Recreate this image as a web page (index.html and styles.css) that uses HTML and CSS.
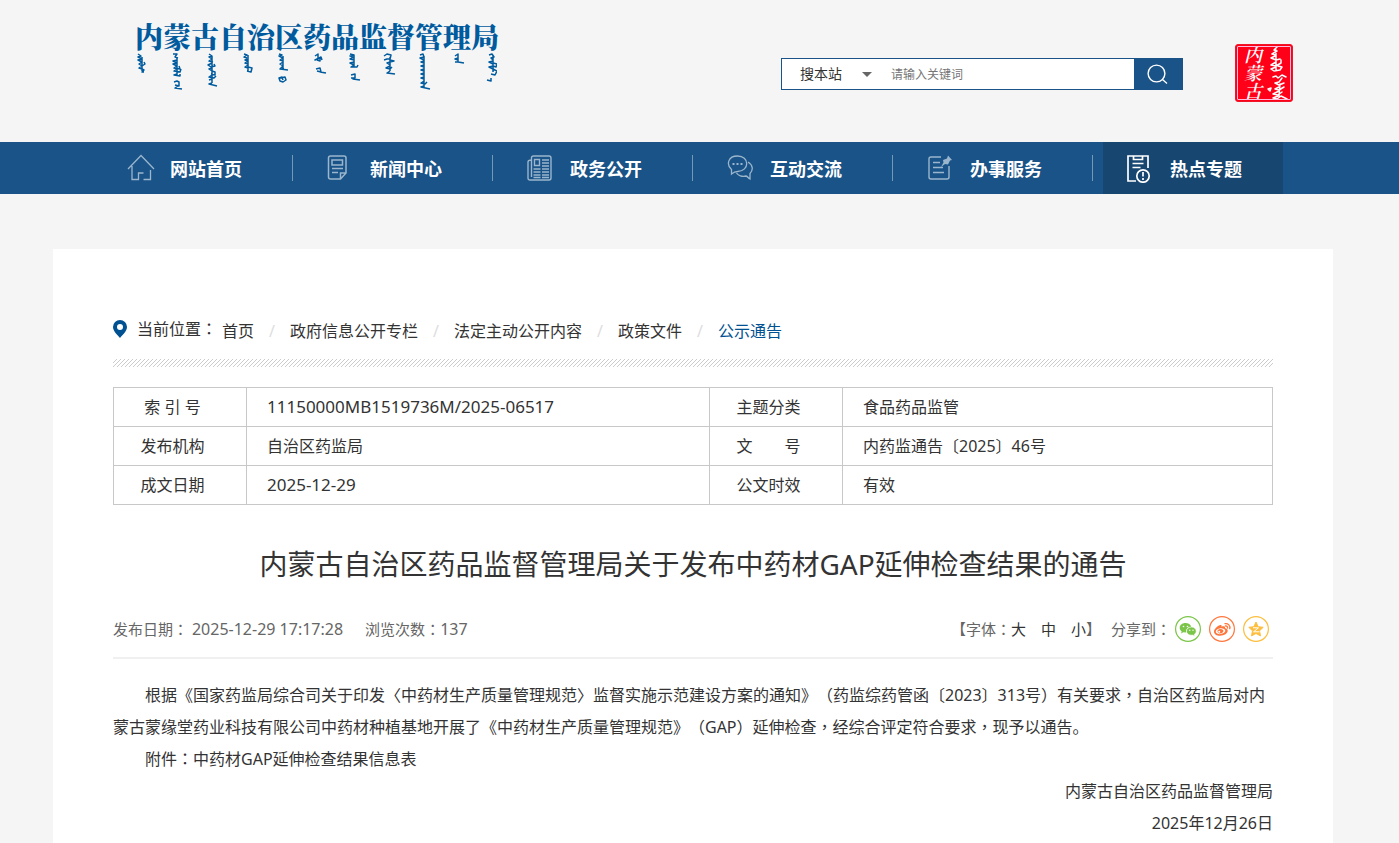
FILE: index.html
```html
<!DOCTYPE html>
<html lang="zh-CN">
<head>
<meta charset="utf-8">
<meta name="viewport" content="width=device-width, initial-scale=1">
<title>内蒙古自治区药品监督管理局</title>
<link rel="stylesheet" href="styles.css">
</head>
<body>
<header class="header">
  <div class="wrap header-inner">
    <a class="logo" href="#">
      <span class="logo-name">内蒙古自治区药品监督管理局</span>
      <svg class="logo-script" viewBox="0 0 362 40" width="362" height="40" aria-hidden="true">
        <g fill="none" stroke="#005b9e" stroke-width="1.500" stroke-linejoin="round">
          <path d="M3 2l3 2-3 1 4 2-4 1 4 2M7 5v14M7 10l-3 2 3 2 3-2-1-2M7 14l-3 2 3 1 2 1-2 2 2 0"/>
          <path d="M38 2h4l-2 3 3 1M42 5v18M42 8l-4 1 4 2-4 1 4 2-3 2 6 1-1-3M42 17l-3 2 6 1 1-3M42 22l-3 1 6 1v-2M39 30l3-1 2 1v4l-4-1M43 34l-3 2 7 1"/>
          <path d="M74 2l3 2-3 1 3 2-3 2 4 1M77 4v27M77 11l-4 2 3 2 4-1-1-2M77 16l-3 1 3 2 3 1v3l-4-1M77 23l-3 2 5 1 2-2M77 27l-3 1M77 31l-3 1 8 2"/>
          <path d="M109 2l3 1-3 2 3 1M113 3v17M113 7l-3 1 3 1-3 2 3 1M113 13l-3 2 3 1M113 15l4 1-1 4-4-1"/>
          <path d="M144 2l3 1-3 1 4 2-3 2 3 1M148 4v13M148 10l-3 2 3 2-3 3 8 1M145 26l5-1 1 3-3 2-3-1-1-3 3-1 1 3"/>
          <path d="M180 4l3-2v5l-3 1 6-3 1 3M185 6v3l-3-1M181 17l4-1 1 4-4-1M185 20l6 1"/>
          <path d="M215 2l4 1-4 1 4 1-4 2 4 1M219 3v12M219 10l-4 1 4 2-3 2 6 0 1-2M216 23l4-1v4h-4M219 26l-1 1 7 1"/>
          <path d="M249 4l3-2 4 1-1 4h-3l-3 1M255 5v14M255 8l4 1-4 1-3 1 3 2M255 14l-4 2 4 1 2-2M255 19l-3 2 8 1"/>
          <path d="M285 3l3-1 1 3-4 1 4 2M289 4v31M289 9l-3 1 3 1M289 13l-3 1 3 1M289 17l-3 1 3 1M289 21l-3 1 3 1M289 25l-3 1 3 1M289 29l-3 2 4 1 2-2M289 34l-3 1 9 2"/>
          <path d="M320 4l3-2v4l-3 1 3 1M323 4v6h-3M323 10l6 1"/>
          <path d="M354 3l3-1 2 3-3 1 2 2M358 4v16M358 9l-4 1 4 2M358 11l4 1-1 3-3-1-4 1 4 2 4 2-2 4-4-1M352 28l4 1v-3"/>
        </g>
      </svg>
    </a>
    <form class="search" role="search">
      <span class="scope">
        <select aria-label="搜索范围"><option>搜本站</option></select>
      </span>
      <input type="text" placeholder="请输入关键词" aria-label="请输入关键词">
      <button type="button" aria-label="搜索">
        <svg viewBox="0 0 22 22" width="22" height="22" fill="none" stroke="#fff" stroke-width="1.4"><circle cx="9.500" cy="10.500" r="8.400"/><path d="M15.500 16.500l4.500 4"/></svg>
      </button>
    </form>
    <div class="seal">
      <span class="seal-name">内蒙古</span>
      <svg viewBox="0 0 24 56" width="24" height="56" aria-hidden="true" fill="none" stroke="#fff" stroke-width="1.500" stroke-linejoin="round" stroke-linecap="round">
        <path d="M11 2l-3 3 3 1-5 3 4 1M10 5v20M9 11l-4 2 5 2M10 15l4-1M10 17l-5 3 5 1 5-3v-3M10 22l-5 2 3 2 6-1 2-3-4-1"/>
        <path d="M7 32l3-1 2 2 4-3 4 2M16 33l-3 4-4 1 4 2 5-2M14 39l-1 12M13 42l-4 2 4 1 5-3M13 46l-6 3 5 1 4-3M12 51l-5 2 4 1 4-3 6 3M2 44l3-1-1 3z"/>
      </svg>
    </div>
  </div>
</header>

<nav class="nav">
  <ul class="wrap nav-list">
    <li><a href="#">
      <svg viewBox="0 0 28 28" fill="none" stroke="currentColor" stroke-width="1.300"><path d="M1 15L14 1.500 27 15M5 12v13.500h6.500V19H16.500M16.500 25.500h7V23.500M23.500 16v9.500"/></svg>
      <span>网站首页</span></a></li>
    <li><a href="#">
      <svg viewBox="0 0 28 28" fill="none" stroke="currentColor" stroke-width="1.500"><path d="M13 25H3.500Q1.500 25 1.500 23V4Q1.500 2 3.500 2H17q2 0 2 2V19l-5.500 6H12M13.500 25v-6H19"/><path d="M5 6h10.500v5H5zM5 14.500h11M5 18.500h6"/></svg>
      <span>新闻中心</span></a></li>
    <li><a href="#">
      <svg viewBox="0 0 28 28" fill="none" stroke="currentColor" stroke-width="1.400"><path d="M4.500 23V4q0-2 2-2H22q2 0 2 2v20q0 2-2 2H3q-2 0-2-2V8q0-2 3.500-2"/><path d="M7.500 5.500h5v6h-5zM15 6h7M15 9h7M15 12h7M6.500 15h7M15 15h7M6.500 18h7M15 18h7M6.500 21h7M15 21h7M6.500 23.500h7M15 23.500h7"/></svg>
      <span>政务公开</span></a></li>
    <li><a href="#">
      <svg viewBox="0 0 28 28" fill="none" stroke="currentColor" stroke-width="1.300"><path d="M4.500 20v-4.500C-1 10.500 1 2 10.500 2c12 0 12.500 15 0 15.500-1 0-3 0-6 2.500zM21 8c5 3 5.500 8 2 11.500V25c-2-1-2-2.500-4-3-4 1-8-.5-9.500-3"/><path d="M5.500 10h2M9.500 10h2M13.500 10h2" stroke-width="2"/></svg>
      <span>互动交流</span></a></li>
    <li><a href="#">
      <svg viewBox="0 0 28 28" fill="none" stroke="currentColor" stroke-width="1.400"><path d="M14 3H4Q2 3 2 5v18q0 2 2 2h16q2 0 2-2V12"/><path d="M6 8.500h7M6 13.500h10M6 18.500h11"/><path d="M21 1.500l4 4.500-2 .5-2 4-3-.5-4 3 2.500-4.500-.5-2.500 4-1.500z" fill="currentColor" stroke="none"/></svg>
      <span>办事服务</span></a></li>
    <li class="active"><a href="#">
      <svg viewBox="0 0 28 30" fill="none" stroke="currentColor" stroke-width="1.700"><path d="M9 28H1V3h20v12M6.500 3v3.500h9V3M5.500 10.500h11M5.500 14.500h8"/><circle cx="16" cy="23" r="6.200"/><path d="M16 19v4.500M16 25v2"/></svg>
      <span>热点专题</span></a></li>
  </ul>
</nav>

<main class="main">
  <article class="wrap paper">
    <div class="location">
      <svg class="pin" viewBox="0 0 14 18" width="14" height="18" aria-hidden="true"><path fill="#005192" fill-rule="evenodd" d="M7 0a7 7 0 0 1 7 7c0 4-4.500 8-7 11C4.500 15 0 11 0 7a7 7 0 0 1 7-7zm0 4a3 3 0 1 0 0 6 3 3 0 0 0 0-6z"/></svg>
      <span class="location-label">当前位置<i lang="zh-TW">：</i></span>
      <ol class="crumbs">
        <li><a href="#">首页</a></li>
        <li><a href="#">政府信息公开专栏</a></li>
        <li><a href="#">法定主动公开内容</a></li>
        <li><a href="#">政策文件</a></li>
        <li><a class="current" href="#">公示通告</a></li>
      </ol>
    </div>
    <div class="stripes"></div>
    <table class="info">
      <colgroup><col class="c-label"><col class="c-wide"><col class="c-label"><col></colgroup>
      <tbody>
        <tr><th scope="row">索 引 号</th><td class="num">11150000MB1519736M/2025-06517</td><th scope="row">主题分类</th><td>食品药品监管</td></tr>
        <tr><th scope="row">发布机构</th><td>自治区药监局</td><th scope="row">文&emsp;&emsp;号</th><td>内药监通告〔2025〕46号</td></tr>
        <tr><th scope="row">成文日期</th><td class="num">2025-12-29</td><th scope="row">公文时效</th><td>有效</td></tr>
      </tbody>
    </table>
    <h1>内蒙古自治区药品监督管理局关于发布中药材GAP延伸检查结果的通告</h1>
    <div class="meta">
      <p class="meta-left"><span>发布日期<i lang="zh-TW">：</i> <time>2025-12-29 17:17:28</time></span><span>浏览次数<i lang="zh-TW">：</i><b>137</b></span></p>
      <div class="meta-right">
        <div class="sizes">【字体<i lang="zh-TW">：</i><button type="button">大</button><button type="button">中</button><button type="button">小</button>】</div>
        <span class="share-label">分享到<i lang="zh-TW">：</i></span>
        <div class="share">
          <a href="#" aria-label="微信"><svg viewBox="0 0 26 26" width="26" height="26"><circle cx="13" cy="13" r="12.400" fill="#fff" stroke="#7bc549" stroke-width="1.200"/><path fill="#7bc549" d="M10.500 7c-3.500 0-5.800 2.200-5.800 4.700 0 1.600.8 2.800 2 3.700l-.7 2 2.400-1.200 2.600.4C10.700 12.800 13 11 16.300 11 15.600 8.500 13.300 7 10.500 7z"/><path fill="#7bc549" stroke="#fff" stroke-width=".6" d="M16.500 11c-3 0-5 1.900-5 4.200 0 2.500 2.700 4.400 6 3.900l2.200 1.100-.5-1.700c1.300-.9 2-2 2-3.300 0-2.400-2.100-4.200-4.700-4.200z"/><g fill="#fff"><circle cx="8.500" cy="10.500" r=".8"/><circle cx="12.500" cy="10.500" r=".8"/><circle cx="14.800" cy="14.200" r=".7"/><circle cx="18" cy="14.200" r=".7"/></g></svg></a>
          <a href="#" aria-label="微博"><svg viewBox="0 0 26 26" width="26" height="26"><circle cx="13" cy="13" r="12.400" fill="#fff" stroke="#ff763b" stroke-width="1.200"/><path fill="#ff763b" fill-rule="evenodd" d="M11.500 9c.8-.2 1.400.5 1 1.800 2-.8 4-.7 3.500 1.300 1.500.4 2.700 1.200 2.700 2.700 0 2.500-3.500 4.900-7.500 4.900-3.500 0-6.200-1.700-6.200-4.300C5 13 9 9.300 11.500 9zM11.400 12.200c-2.800.2-4.700 1.800-4.600 3.500.1 1.600 2.200 2.600 4.800 2.400 2.800-.2 4.800-1.900 4.700-3.500-.1-1.600-2.200-2.600-4.900-2.400z"/><path fill="#ff763b" fill-rule="evenodd" d="M11.500 13c2 0 3.300 1 2.800 2.600-.6 1.700-3 2.500-4.600 1.700-1.400-.7-1.600-2.100-.7-3.200.6-.7 1.500-1.100 2.500-1.100zm-1.300 1.700a1 1 0 1 0 .1 2 1 1 0 0 0-.1-2z"/><path fill="none" stroke="#ff763b" stroke-width="1.300" stroke-linecap="round" d="M16 7.700c3-.6 5.700 2 4.700 5M16.500 10c1.400-.2 2.300.8 2 2"/></svg></a>
          <a href="#" aria-label="QQ空间"><svg viewBox="0 0 26 26" width="26" height="26"><circle cx="13" cy="13" r="12.400" fill="#fff" stroke="#fdbe3d" stroke-width="1.200"/><path fill="#fdbe3d" stroke="#fdbe3d" stroke-linejoin="round" d="M13 6l2.100 4.700 5.100.6-3.700 3.500 1 5.100L13 17.400l-4.500 2.500 1-5.100-3.700-3.500 5.100-.6z"/><path fill="none" stroke="#fff" d="M10 11.800h5.500l-5 4h6"/></svg></a>
        </div>
      </div>
    </div>
    <div class="content">
      <p>根据《国家药监局综合司关于印发〈中药材生产质量管理规范〉监督实施示范建设方案的通知》（药监综药管函〔2023〕313号）有关要求<i lang="zh-TW">，</i>自治区药监局对内蒙古蒙缘堂药业科技有限公司中药材种植基地开展了《中药材生产质量管理规范》（GAP）延伸检查<i lang="zh-TW">，</i>经综合评定符合要求<i lang="zh-TW">，</i>现予以通告。</p>
      <p>附件<i lang="zh-TW">：</i>中药材GAP延伸检查结果信息表</p>
      <p class="sign">内蒙古自治区药品监督管理局</p>
      <p class="sign">2025年12月26日</p>
    </div>
  </article>
</main>
</body>
</html>
```
FILE: styles.css
```css
* { box-sizing: border-box; }
html { overflow: hidden; }
body {
  margin: 0;
  background: #f5f5f5;
  color: #333;
  font: 16px/24px "Noto Sans", "Noto Sans CJK SC", sans-serif;
  text-spacing-trim: space-all;
}
a { color: inherit; text-decoration: none; }
/* centred full-width punctuation */
i { font-style: normal; font-family: "Noto Sans", "Noto Sans CJK TC", sans-serif; }
ul, ol { margin: 0; padding: 0; list-style: none; }
p { margin: 0; }
button, input, select { font: inherit; color: inherit; border: 0; padding: 0; margin: 0; background: none; }
.header, .nav, .main { padding-right: 13px; }
.wrap { max-width: 1280px; margin: 0 auto; }

.header-inner { display: flex; align-items: flex-start; height: 142px; padding: 0 40px 0 82px; }
.logo { display: flex; flex-direction: column; padding-top: 20px; color: #005b9e; }
.logo-name { font: 900 28px/32px "Noto Serif CJK SC", "Noto Sans CJK SC", serif; white-space: nowrap; }
.search { display: flex; width: 402px; height: 32px; margin: 58px 52px 0 auto; border: 1px solid #1a5387; background: #fff; }
.scope { display: flex; align-items: center; width: 91px; padding-left: 18px; font-size: 14px; }
.scope select { appearance: none; width: 62px; height: 30px; outline: 0; }
.scope::after { content: ""; border: 5px solid transparent; border-top-color: #666; border-bottom: 0; }
.search input { flex: 1; min-width: 0; padding: 2px 0 0 18px; font-size: 12px; outline: 0; }
.search input::placeholder { color: #757575; }
.search button { display: flex; align-items: center; justify-content: center; width: 48px; background: #1a5387; }
.seal {
  display: flex; justify-content: space-between; width: 58px; height: 58px; margin-top: 44px; padding: 0 2px 0 8px;
  border: 1px solid #f0162a; border-radius: 3px; outline: 1px solid #fbd; outline-offset: -3px;
  background: #ff0019; color: #fff;
}
.seal-name { width: 20px; font: italic 600 18px/18px "Noto Serif CJK SC", serif; word-break: break-all; }

.nav { background: #1a5387; }
.nav-list { display: flex; gap: 20px; padding-left: 50px; }
.nav-list li { position: relative; width: 180px; }
.nav-list a { display: flex; align-items: center; gap: 15px; height: 52px; padding-left: 24px; color: #9bb6cd; }
.nav-list svg { width: 28px; height: 28px; }
.nav-list .active svg { height: 30px; }
.nav-list span { padding-top: 2px; color: #fff; font-size: 18px; font-weight: 700; }
.nav-list li + li::before { content: ""; position: absolute; left: -11px; top: 13px; width: 1px; height: 26px; background: #7598b7; }
.nav-list .active { background: #174670; }
.nav-list .active a { color: #fff; }

.main { padding-top: 55px; }
.paper { min-height: 594px; padding: 68px 60px 0; background: #fff; }
.location { display: flex; align-items: flex-start; height: 42px; }
.pin { margin: 3px 10px 0 0; }
.crumbs { display: flex; padding: 2px 0 0 5px; }
.crumbs li + li::before { content: "/"; display: inline-block; width: 36px; text-align: center; color: #ddd; }
.current { color: #005192; }
.stripes { height: 8px; background: linear-gradient(135deg, #fff 38%, #ccc 38% 62%, #fff 62%) 0 0 / 4px 4px; }
.info { width: 100%; margin-top: 20px; border-collapse: collapse; table-layout: fixed; }
.c-label { width: 133px; }
.c-wide { width: 463px; }
.info th, .info td { height: 39px; padding: 0 20px; border: 1px solid #c8c8c8; font-weight: 400; text-align: left; line-height: 24px; }
.info th { padding: 0 15px 0 0; text-align: center; }
.info .num { font-size: 17px; }
h1 { margin: 38px 0 0; font-size: 28px; line-height: 42px; font-weight: 400; text-align: center; }
.meta { display: flex; justify-content: space-between; align-items: center; margin-top: 24px; height: 50px; border-bottom: 2px solid #f0f0f0; color: #666; font-size: 15px; padding-bottom: 8px; }
.meta-left { display: flex; gap: 22px; }
.meta-left time, .meta-left b { font-size: 16px; font-weight: 400; }
.meta-right { display: flex; align-items: center; padding-right: 4px; }
.sizes { display: flex; }
.sizes button { color: #333; }
.sizes button + button { margin-left: 15px; }
.share-label { margin: 0 4px 0 10px; }
.share { display: flex; gap: 8px; }
.share a { display: flex; }
.content { padding-top: 20px; line-height: 32px; }
.content p { text-indent: 32px; }
.content .sign { text-align: right; }
```
